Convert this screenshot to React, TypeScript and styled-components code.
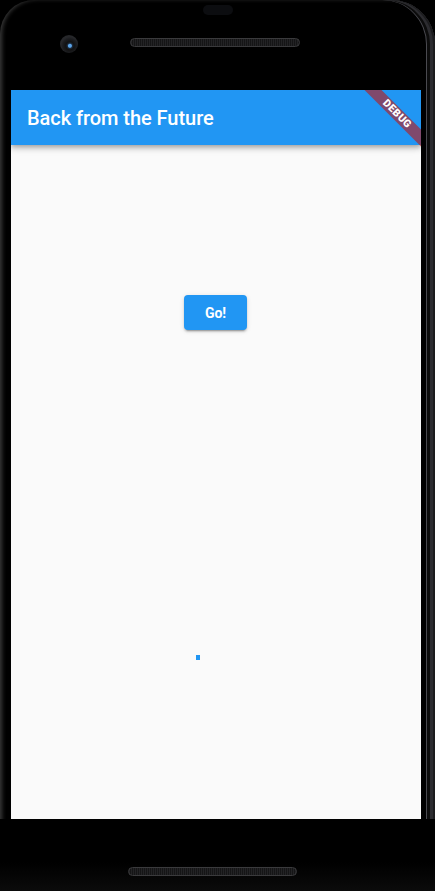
import React from 'react';
import styled, { createGlobalStyle } from 'styled-components';

const GlobalStyle = createGlobalStyle`
  html, body {
    margin: 0;
    padding: 0;
    background: #000;
    overflow: hidden;
  }
  body {
    font-family: Roboto, "Noto Sans", "Liberation Sans", sans-serif;
  }
`;

const Phone = styled.div`
  position: relative;
  width: 435px;
  height: 891px;
  box-sizing: border-box;
  background: #000;
  border-radius: 34px 44px 0 0;
  display: flex;
  flex-direction: column;
  box-shadow:
    inset 3px 0 4px -1px #3a3a3a,
    inset -2px 0 0 #1c1c1e,
    inset -5px 0 0 #2c2c30,
    inset -8px 0 0 #0c0c0c,
    inset -9px 0 0 #4a4a50;
`;

const TopBezel = styled.div`
  height: 90px;
  display: flex;
  flex-direction: column;
  align-items: center;
`;

const Earpiece = styled.div`
  width: 30px;
  height: 10px;
  margin-top: 5px;
  border-radius: 5px;
  background: #0c0d10;
`;

const SensorRow = styled.div`
  align-self: stretch;
  display: flex;
  align-items: center;
  padding-left: 60px;
  margin-top: 16px;
  gap: 52px;
`;

const Camera = styled.div`
  width: 18px;
  height: 18px;
  border-radius: 50%;
  background: radial-gradient(circle at 55% 60%, #5ba4e8 0 1.5px, #1b2a3c 2.5px, #111 4px, #1b1c1f 7px, #26272a 9px);
  margin-top: 4px;
`;

const Grille = styled.div<{ $w: number }>`
  width: ${({ $w }) => $w}px;
  height: 9px;
  border-radius: 5px;
  border: 1px solid #3a3a3c;
  background: repeating-linear-gradient(90deg, #232325 0 1px, #151516 1px 2px);
  box-sizing: border-box;
`;

const Screen = styled.div`
  position: relative;
  margin: 0 14px 0 11px;
  height: 729px;
  background: #fafafa;
  overflow: hidden;
  display: flex;
  flex-direction: column;
`;

const AppBar = styled.header`
  height: 55px;
  flex-shrink: 0;
  background: #2196f3;
  display: flex;
  align-items: center;
  padding-left: 16px;
  box-shadow: 0 2px 4px -1px rgba(0, 0, 0, 0.2), 0 4px 5px 0 rgba(0, 0, 0, 0.14), 0 1px 10px 0 rgba(0, 0, 0, 0.12);
  z-index: 1;
`;

const Title = styled.h1`
  margin: 0;
  color: #fff;
  font-size: 20px;
  font-weight: 500;
  letter-spacing: -0.05px;
`;

const Body = styled.main`
  flex: 1;
  display: flex;
  flex-direction: column;
  align-items: center;
  padding-top: 150px;
  padding-right: 1px;
`;

const GoButton = styled.button`
  min-width: 63px;
  height: 35px;
  padding: 0 16px;
  border: none;
  border-radius: 4px;
  background: #2196f3;
  color: #fff;
  font-family: Roboto, "Liberation Sans", sans-serif;
  font-size: 14px;
  font-weight: 700;
  box-shadow: 0 3px 1px -2px rgba(0, 0, 0, 0.2), 0 2px 2px 0 rgba(0, 0, 0, 0.14), 0 1px 5px 0 rgba(0, 0, 0, 0.12);
  cursor: pointer;
`;

const Dot = styled.div`
  align-self: flex-start;
  margin: 325px 0 0 185px;
  width: 4px;
  height: 5px;
  background: #2196f3;
`;

const Banner = styled.div`
  position: absolute;
  top: 18px;
  right: -26px;
  width: 100px;
  height: 12px;
  transform: rotate(45deg);
  background: rgba(183, 28, 28, 0.63);
  color: #fff;
  font-family: Roboto, "Liberation Sans", sans-serif;
  font-size: 10.5px;
  font-weight: 900;
  line-height: 12px;
  text-align: center;
  letter-spacing: 0.4px;
  z-index: 2;
`;

const BottomBezel = styled.div`
  flex: 1;
  display: flex;
  justify-content: center;
  padding-top: 48px;
  padding-right: 10px;
  background: linear-gradient(180deg, #000 60%, #0b0b0b 100%);
`;

export default function App() {
  return (
    <>
      <GlobalStyle />
      <Phone>
        <TopBezel>
          <Earpiece />
          <SensorRow>
            <Camera />
            <Grille $w={170} />
          </SensorRow>
        </TopBezel>
        <Screen>
          <AppBar>
            <Title>Back from the Future</Title>
          </AppBar>
          <Body>
            <GoButton>Go!</GoButton>
            <Dot />
          </Body>
          <Banner>DEBUG</Banner>
        </Screen>
        <BottomBezel>
          <Grille $w={169} />
        </BottomBezel>
      </Phone>
    </>
  );
}
